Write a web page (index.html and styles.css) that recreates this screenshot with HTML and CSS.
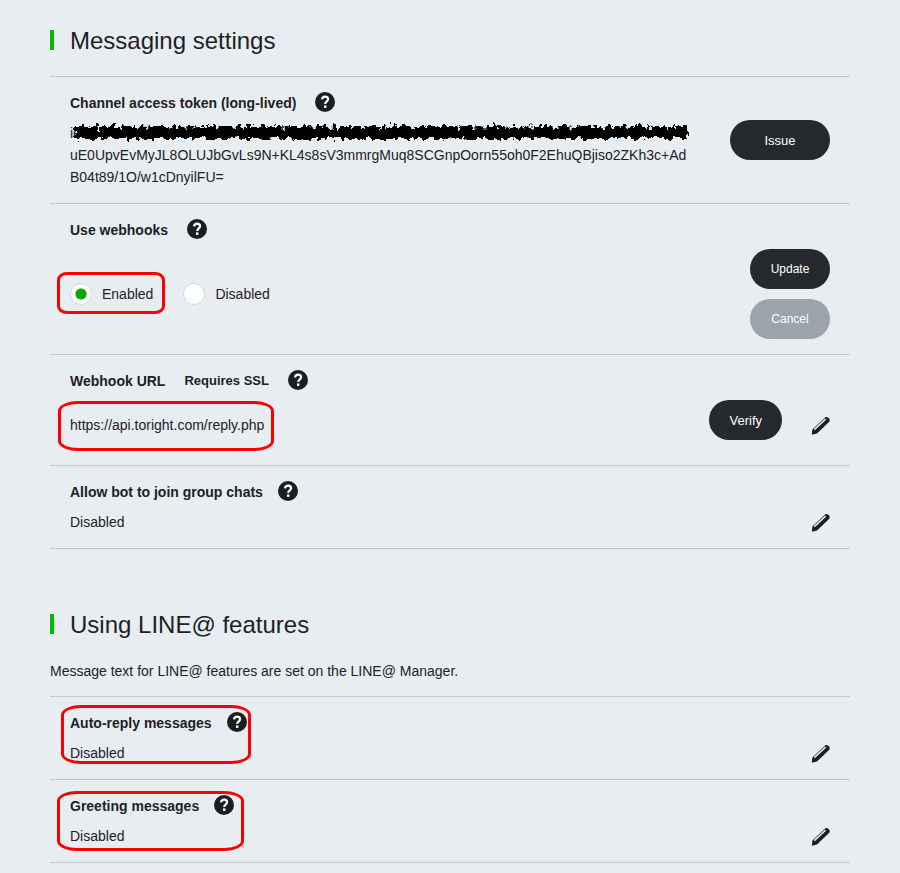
FILE: index.html
```html
<!DOCTYPE html>
<html lang="en">
<head>
<meta charset="utf-8">
<title>Channel settings</title>
<link rel="stylesheet" href="styles.css">
</head>
<body>
<svg class="defs" aria-hidden="true">
  <symbol id="help" viewBox="0 0 20 20">
    <circle cx="10" cy="10" r="10" fill="#1b1e23"/>
    <path d="M7 7.400C7.300 5.400 8.400 4.600 10.100 4.600c1.800 0 3 .9 3 2.600 0 2.200-2.900 2.300-2.900 4.900" fill="none" stroke="#fff" stroke-width="2.200"/>
    <rect x="9" y="13.400" width="2.400" height="2.500" fill="#fff"/>
  </symbol>
  <symbol id="pencil" viewBox="0 0 20 20">
    <path d="M1.800 19.800L2.400 14.400 14.600 3Q16.400 1.200 18.600 3 20.800 5.200 19 7L7 18.600Z" fill="#1b1e23"/>
    <path d="M4.300 14.600L15.600 4.100" fill="none" stroke="#e8edf1" stroke-width="1.500"/>
  </symbol>
</svg>
<main class="page">
  <section>
    <h2 class="heading">Messaging settings</h2>
    <div class="list">
      <div class="row row-centered">
        <div class="content">
          <h3 class="title">Channel access token (long-lived) <button class="help wide" aria-label="Help"><svg><use href="#help"/></svg></button></h3>
          <div class="value token">
            <span class="masked">ie<svg class="scribble" viewBox="0 0 618 22" preserveAspectRatio="none" aria-hidden="true">
              <filter id="rough" x="-2%" y="-60%" width="104%" height="220%">
                <feTurbulence type="fractalNoise" baseFrequency="0.2" numOctaves="2" seed="7"/>
                <feDisplacementMap in="SourceGraphic" scale="10" xChannelSelector="R" yChannelSelector="G"/>
              </filter>
              <g filter="url(#rough)" fill="none" stroke="#000">
                <path d="M4 12.500H614" stroke-width="9"/>
                <path d="M4 7H614" stroke-width="4" stroke-dasharray="14 2 6 2 21 3"/>
                <path d="M8 17H612" stroke-width="2" stroke-dasharray="17 4 8 3"/>
              </g>
            </svg></span>
            <span>uE0UpvEvMyJL8OLUJbGvLs9N+KL4s8sV3mmrgMuq8SCGnpOorn55oh0F2EhuQBjiso2ZKh3c+AdB04t89/1O/w1cDnyilFU=</span>
          </div>
        </div>
        <button class="button issue">Issue</button>
      </div>

      <div class="row">
        <div class="content">
          <h3 class="title">Use webhooks <button class="help wide" aria-label="Help"><svg><use href="#help"/></svg></button></h3>
          <div class="value split">
            <div class="options">
              <label class="option marked mark-option"><input type="radio" name="webhooks" checked>Enabled</label>
              <label class="option"><input type="radio" name="webhooks">Disabled</label>
            </div>
            <div class="stack">
              <button class="button small">Update</button>
              <button class="button small muted">Cancel</button>
            </div>
          </div>
        </div>
      </div>

      <div class="row">
        <div class="content">
          <h3 class="title">Webhook URL <small class="note">Requires SSL</small> <button class="help wide" aria-label="Help"><svg><use href="#help"/></svg></button></h3>
          <div class="value split url">
            <span class="marked mark-url">https://api.toright.com/reply.php</span>
            <div class="actions">
              <button class="button verify">Verify</button>
              <button class="edit" aria-label="Edit"><svg><use href="#pencil"/></svg></button>
            </div>
          </div>
        </div>
      </div>

      <div class="row">
        <div class="content">
          <h3 class="title">Allow bot to join group chats <button class="help" aria-label="Help"><svg><use href="#help"/></svg></button></h3>
          <div class="value split">
            <span>Disabled</span>
            <button class="edit" aria-label="Edit"><svg><use href="#pencil"/></svg></button>
          </div>
        </div>
      </div>
    </div>
  </section>

  <section class="features">
    <h2 class="heading">Using LINE@ features</h2>
    <p class="intro">Message text for LINE@ features are set on the LINE@ Manager.</p>
    <div class="list">
      <div class="row">
        <div class="content marked mark-auto">
          <h3 class="title">Auto-reply messages <button class="help" aria-label="Help"><svg><use href="#help"/></svg></button></h3>
          <div class="value split">
            <span>Disabled</span>
            <button class="edit" aria-label="Edit"><svg><use href="#pencil"/></svg></button>
          </div>
        </div>
      </div>
      <div class="row">
        <div class="content marked mark-greeting">
          <h3 class="title">Greeting messages <button class="help" aria-label="Help"><svg><use href="#help"/></svg></button></h3>
          <div class="value split">
            <span>Disabled</span>
            <button class="edit" aria-label="Edit"><svg><use href="#pencil"/></svg></button>
          </div>
        </div>
      </div>
    </div>
  </section>
</main>
</body>
</html>
```
FILE: styles.css
```css
*,
*::before,
*::after {
  box-sizing: border-box;
}

body {
  margin: 0;
  background: #e8edf1;
  color: #1e2125;
  font: 14px/22px "Liberation Sans", Arial, sans-serif;
}

button {
  padding: 0;
  border: 0;
  background: none;
  font-family: inherit;
  cursor: pointer;
}

.defs {
  position: absolute;
  width: 0;
  height: 0;
}

.page {
  padding: 25px 50px 10px;
}

.features {
  margin-top: 60px;
}

.heading {
  display: flex;
  align-items: flex-start;
  gap: 16px;
  margin: 0 0 19px;
  font-size: 24px;
  font-weight: 400;
  line-height: 32px;
}

.heading::before {
  content: "";
  width: 4px;
  height: 20px;
  margin-top: 5px;
  background: #00b900;
}

.intro {
  margin: 0 0 14px;
}

.list {
  border-bottom: 1px solid #c5cad0;
}

.row {
  display: flex;
  gap: 40px;
  padding: 15px 20px;
  border-top: 1px solid #c5cad0;
}

.row-centered {
  align-items: center;
}

.content {
  flex: 1;
  min-width: 0;
}

.title {
  display: flex;
  align-items: flex-start;
  height: 22px;
  margin: 0 0 8px;
  font-size: 14px;
}

.note {
  margin-left: 19px;
  font-size: 13px;
}

.help {
  width: 20px;
  height: 20px;
  margin-left: 15px;
}

.help.wide {
  margin-left: 19px;
}

.help svg,
.edit svg {
  display: block;
  width: 20px;
  height: 20px;
}

.split {
  display: flex;
  justify-content: space-between;
  align-items: center;
}

.token {
  word-break: break-all;
}

.token > span {
  display: block;
}

.masked {
  position: relative;
}

.scribble {
  position: absolute;
  top: -1px;
  left: 1px;
  width: 100%;
  height: 22px;
  overflow: visible;
}

.button {
  height: 40px;
  padding: 0 20px;
  border-radius: 20px;
  background: #26292e;
  color: #fff;
  font-size: 13px;
}

.issue {
  width: 100px;
}

.small {
  width: 80px;
  padding: 0;
  font-size: 12px;
}

.muted {
  background: #9ba3ab;
}

.stack {
  display: flex;
  flex-direction: column;
  gap: 10px;
}

.options {
  display: flex;
  gap: 30px;
}

.option {
  display: flex;
  align-items: center;
  gap: 10px;
}

.option input {
  appearance: none;
  width: 22px;
  height: 22px;
  margin: 0;
  border: 1px solid #d5dade;
  border-radius: 50%;
  background: #fff;
}

.option input:checked {
  background: radial-gradient(circle, #00a800 5px, #fff 6px);
}

.url {
  height: 50px;
}

.actions {
  display: flex;
  align-items: center;
  align-self: stretch;
  gap: 28px;
}

.verify {
  align-self: flex-start;
}

.edit {
  width: 20px;
  height: 20px;
}

/* Hand-drawn highlights laid over the settings */
.marked {
  position: relative;
}

.marked::after {
  content: "";
  position: absolute;
  border: 3px solid #f00;
  border-radius: 20px / 10px;
  pointer-events: none;
}

.mark-option::after {
  inset: -11px -12px -9px -13px;
  border-radius: 10px / 8px;
}

.mark-url::after {
  inset: -13px -10px -15px -12px;
}

.mark-auto::after {
  top: -7px;
  left: -9px;
  width: 190px;
  height: 59px;
}

.mark-greeting::after {
  top: -4px;
  left: -13px;
  width: 187px;
  height: 60px;
}
```
